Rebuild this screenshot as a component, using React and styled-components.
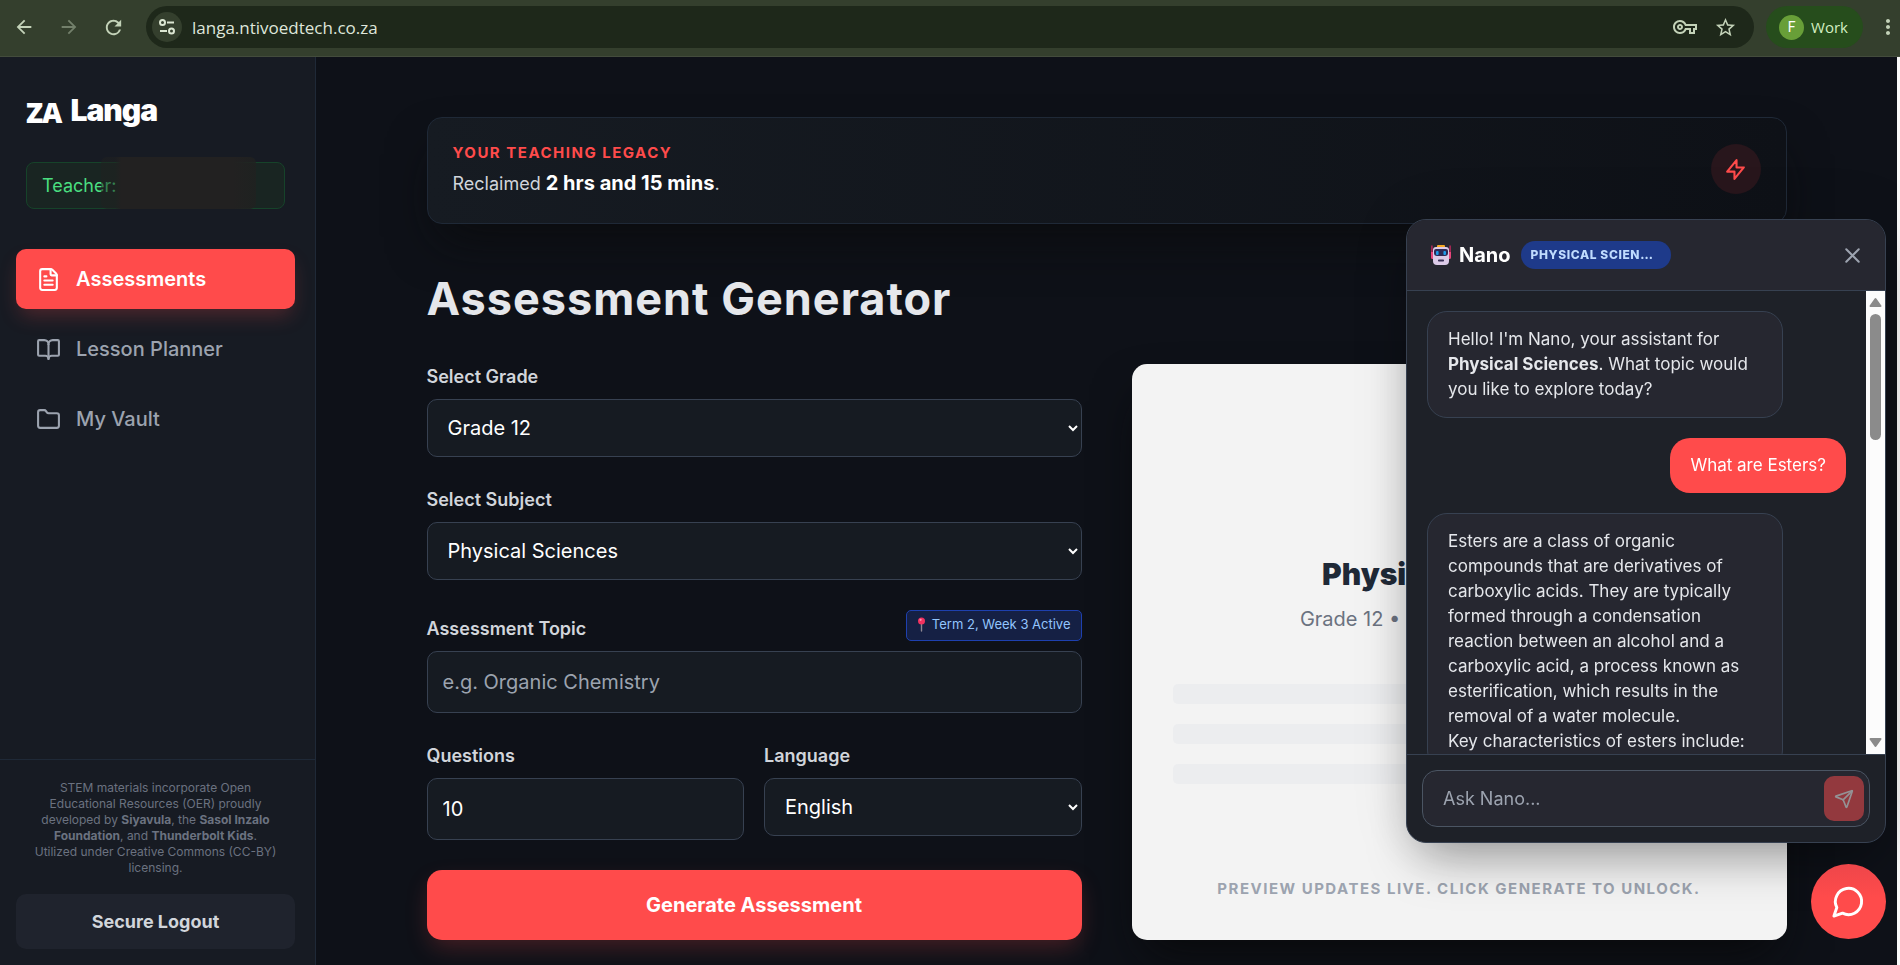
import React, { useState } from "react";
import styled, { createGlobalStyle } from "styled-components";
import { FileText, BookOpen, Folder, Send } from "lucide-react";
import {
  MdArrowBack,
  MdArrowForward,
  MdRefresh,
  MdStarBorder,
  MdMoreVert,
  MdOutlineVpnKey,
} from "react-icons/md";

const GlobalStyle = createGlobalStyle`
  *, *::before, *::after { box-sizing: border-box; }
  body {
    margin: 0;
    background: #0e1118;
    color: #e5e7eb;
    font-family: Inter, "Liberation Sans", sans-serif;
    font-size: 18px;
    line-height: 25px;
  }
  button, input, select { font-family: inherit; }
  button { border: 0; padding: 0; cursor: pointer; }
  h1, h2, p { margin: 0; }
`;

const Window = styled.div`
  display: flex;
  flex-direction: column;
  height: 100vh;
  overflow: hidden;
`;

/* Browser toolbar */

const BrowserBar = styled.header`
  display: flex;
  align-items: center;
  flex: none;
  height: 57px;
  padding: 0 0 2px 12px;
  background: #343f2d;
  border-bottom: 1px solid #434c3c;
`;

const BarButton = styled.button`
  display: grid;
  place-items: center;
  width: 24px;
  height: 24px;
  margin-right: ${(p) => p.$gap || 0}px;
  background: none;
  color: ${(p) => (p.$dim ? "#73806b" : "#c3d2b8")};
`;

const AddressBar = styled.div`
  display: flex;
  align-items: center;
  flex: 1;
  height: 42px;
  padding: 0 17px 0 6px;
  border-radius: 21px;
  background: #1e281a;
`;

const SiteButton = styled.button`
  display: grid;
  place-items: center;
  width: 30px;
  height: 30px;
  margin-right: 10px;
  border-radius: 50%;
  background: #343f2d;
  color: #dbe6d2;
`;

const Address = styled.input`
  flex: 1;
  min-width: 0;
  border: 0;
  padding: 0;
  outline: 0;
  background: none;
  color: #dfe6da;
  font-family: "Open Sans", "Noto Sans", sans-serif;
  font-size: 17px;
`;

const Profile = styled.button`
  display: flex;
  align-items: center;
  gap: 7px;
  height: 42px;
  margin: 0 13px 0 12px;
  padding: 0 15px 0 13px;
  border-radius: 21px;
  background: #264d1c;
  color: #d3efc2;
  font-family: "Open Sans", "Noto Sans", sans-serif;
  font-size: 15px;
`;

const Initial = styled.span`
  display: grid;
  place-items: center;
  width: 25px;
  height: 25px;
  border-radius: 50%;
  background: #689f38;
  color: #fff;
  font-family: Roboto, sans-serif;
  font-size: 14px;
`;

/* Page shell */

const Page = styled.div`
  display: flex;
  flex: 1;
  min-height: 0;
  border-right: 3px solid #fafafa;
`;

const Sidebar = styled.aside`
  display: flex;
  flex-direction: column;
  flex: none;
  width: 316px;
  background: #171b23;
  border-right: 1px solid #1f2937;
`;

const SidebarTop = styled.div`
  padding: 33px 30px 40px 26px;
`;

const Brand = styled.div`
  display: flex;
  align-items: flex-end;
  gap: 9px;
  color: #fff;
  font-size: 30px;
  font-weight: 900;
  line-height: 40px;
  letter-spacing: -1px;
`;

const CountryCode = styled.span`
  font-family: "Open Sans", sans-serif;
  font-size: 28px;
  font-weight: 800;
  line-height: 35px;
`;

const TeacherTag = styled.div`
  position: relative;
  height: 47px;
  margin-top: 32px;
  padding: 10px 15px;
  border: 1px solid #16432a;
  border-radius: 8px;
  background: #192522;
  color: #4ade80;
  font-size: 18px;
`;

const Redaction = styled.span`
  position: absolute;
  top: -6px;
  right: 28px;
  bottom: -1px;
  left: 74px;
  border-radius: 6px;
  background: linear-gradient(90deg, rgba(32, 33, 32, 0.5) 9%, #222121 13%, #222121 85%, rgba(32, 33, 32, 0.8));
`;

const Nav = styled.nav`
  display: flex;
  flex-direction: column;
  gap: 10px;
  flex: 1;
  padding: 0 20px 0 16px;
`;

const NavItem = styled.button`
  display: flex;
  align-items: center;
  gap: 15px;
  height: 60px;
  padding: 0 20px;
  border-radius: 10px;
  background: ${(p) => (p.$active ? "#ff4b4b" : "none")};
  box-shadow: ${(p) => (p.$active ? "0 10px 20px -4px rgba(255, 75, 75, 0.25)" : "none")};
  color: ${(p) => (p.$active ? "#fff" : "#9ca3af")};
  font-size: 20px;
  font-weight: ${(p) => (p.$active ? 600 : 500)};
`;

const SidebarFooter = styled.footer`
  padding: 20px 20px 16px 16px;
  border-top: 1px solid #1f2937;
`;

const Credits = styled.p`
  padding: 0 14px;
  margin-bottom: 18px;
  color: #6b7280;
  font-size: 12px;
  line-height: 16px;
  text-align: center;
`;

const LogoutButton = styled.button`
  width: 100%;
  height: 55px;
  border-radius: 10px;
  background: #1f232d;
  color: #d1d5db;
  font-size: 18px;
  font-weight: 700;
`;

const Main = styled.main`
  flex: 1;
  min-width: 0;
  overflow: hidden;
`;

const Content = styled.div`
  max-width: 1440px;
  margin: 0 auto;
  padding: 60px 40px 25px;
`;

const LegacyBanner = styled.section`
  display: flex;
  align-items: center;
  justify-content: space-between;
  padding: 22px 25px 25px;
  border: 1px solid #1f2937;
  border-radius: 15px;
  background: linear-gradient(90deg, #161b22, #0e1117);
  box-shadow: 0 25px 50px -12px rgba(10, 10, 10, 0.7);
`;

const Overline = styled.p`
  color: #ff4b4b;
  font-size: 15px;
  font-weight: 700;
  letter-spacing: 1.5px;
`;

const Reclaimed = styled.p`
  margin-top: 4px;
  color: #d1d5db;
  font-size: 18px;
  line-height: 28px;

  strong { color: #fff; font-size: 20px; }
`;

const BoltCircle = styled.span`
  display: grid;
  place-items: center;
  width: 50px;
  height: 50px;
  border-radius: 50%;
  background: #28161c;
  color: #ff4b4b;
`;

const Title = styled.h1`
  margin: 50px 0 40px;
  color: #e5e7eb;
  font-size: 45px;
  font-weight: 700;
  letter-spacing: 1px;
  line-height: 50px;
`;

const Columns = styled.div`
  display: grid;
  grid-template-columns: 1fr 1fr;
  gap: 50px;
`;

const Form = styled.form`
  display: flex;
  flex-direction: column;
  gap: 30px;
`;

const Field = styled.div`
  display: flex;
  flex-direction: column;
  gap: 10px;
  min-width: 0;
`;

const FieldPair = styled.div`
  display: grid;
  grid-template-columns: 1fr 1fr;
  gap: 20px;
`;

const LabelRow = styled.div`
  display: flex;
  align-items: flex-end;
  justify-content: space-between;
`;

const Label = styled.label`
  color: #d1d5db;
  font-size: 18px;
  font-weight: 600;
`;

const TermBadge = styled.span`
  display: flex;
  align-items: center;
  gap: 6px;
  height: 31px;
  padding: 0 10px 2px;
  border: 1px solid #1e40af;
  border-radius: 5px;
  background: #152044;
  color: #93c5fd;
  font-size: 13px;
`;

const TextInput = styled.input`
  width: 100%;
  height: 62px;
  padding: 0 15px;
  border: 1px solid #374151;
  border-radius: 10px;
  background: #161b22;
  color: #fff;
  font-size: 20px;

  &::placeholder { color: #9ca3af; }
`;

const Select = styled.select`
  width: 100%;
  height: 58px;
  padding: 0 0 0 16px;
  border: 1px solid #374151;
  border-radius: 10px;
  background: #161b22;
  color: #fff;
  font-size: 20px;
`;

const GenerateButton = styled.button`
  height: 70px;
  border-radius: 15px;
  background: #ff4b4b;
  box-shadow: 0 10px 25px -4px rgba(255, 75, 75, 0.25);
  color: #fff;
  font-size: 20px;
  font-weight: 700;
`;

const Preview = styled.section`
  display: flex;
  flex-direction: column;
  align-items: center;
  padding: 190px 41px 39px;
  border-radius: 15px;
  background: #f3f3f3;
  box-shadow: 0 25px 50px -12px rgba(8, 8, 8, 0.8);
`;

const PreviewTitle = styled.h2`
  color: #1f2937;
  font-size: 30px;
  font-weight: 900;
  line-height: 40px;
`;

const PreviewMeta = styled.p`
  margin: 10px 0 50px;
  color: #6b7280;
  font-size: 20px;
  line-height: 30px;
`;

const Skeleton = styled.span`
  width: 100%;
  height: 20px;
  margin-bottom: 20px;
  border-radius: 5px;
  background: #ecedef;
`;

const PreviewNote = styled.p`
  margin-top: auto;
  color: #9ca3af;
  font-size: 15px;
  font-weight: 700;
  letter-spacing: 1.5px;
  white-space: nowrap;
`;

/* Assistant */

const ChatPanel = styled.section`
  position: fixed;
  right: 14px;
  bottom: 122px;
  display: flex;
  flex-direction: column;
  width: 480px;
  height: 624px;
  overflow: hidden;
  border: 1px solid #374151;
  border-radius: 20px;
  background: #1e2128;
  box-shadow: 0 25px 50px -12px rgba(0, 0, 0, 0.35), 0 0 60px rgba(0, 0, 0, 0.1);
`;

const ChatHeader = styled.div`
  display: flex;
  align-items: center;
  flex: none;
  height: 71px;
  padding: 0 20px 0 24px;
  border-bottom: 1px solid #374151;
  background: #262730;
`;

const ChatName = styled.h2`
  margin: 0 10px 0 8px;
  color: #fff;
  font-size: 20px;
  font-weight: 700;
`;

const SubjectPill = styled.span`
  width: 150px;
  padding: 0 10px;
  overflow: hidden;
  border-radius: 14px;
  background: #1e3a8a;
  color: #bfdbfe;
  font-size: 12px;
  font-weight: 800;
  letter-spacing: 0.6px;
  line-height: 28px;
  text-overflow: ellipsis;
  text-transform: uppercase;
  white-space: nowrap;
`;

const CloseButton = styled.button`
  display: grid;
  place-items: center;
  margin-left: auto;
  background: none;
  color: #9ca3af;
`;

const ChatBody = styled.div`
  display: flex;
  flex: 1;
  min-height: 0;
`;

const Messages = styled.div`
  display: flex;
  flex-direction: column;
  align-items: flex-start;
  gap: 20px;
  flex: 1;
  padding: 20px;
  overflow: hidden;
`;

const Message = styled.div`
  flex: none;
  align-self: ${(p) => (p.$mine ? "flex-end" : "flex-start")};
  max-width: 356px;
  padding: 15px 20px;
  border: ${(p) => (p.$mine ? "0" : "1px solid #374151")};
  border-radius: 20px;
  background: ${(p) => (p.$mine ? "#ff4b4b" : "#262730")};
  color: ${(p) => (p.$mine ? "#fff" : "#e5e7eb")};
  font-size: 17px;
  line-height: 25px;
`;

const ScrollTrack = styled.div`
  display: flex;
  flex-direction: column;
  align-items: center;
  width: 19px;
  padding: 6px 0;
  background: #fcfcfc;
`;

const ScrollThumb = styled.span`
  width: 11px;
  height: 126px;
  margin: 7px 0 auto;
  border-radius: 6px;
  background: #8b8b8b;
`;

const ChatForm = styled.form`
  position: relative;
  flex: none;
  padding: 15px;
  border-top: 1px solid #374151;
`;

const ChatInput = styled.input`
  display: block;
  width: 100%;
  height: 57px;
  padding: 0 60px 0 20px;
  border: 1px solid #4b5563;
  border-radius: 15px;
  background: #262730;
  color: #e5e7eb;
  font-size: 18px;

  &::placeholder { color: #9ca3af; }
`;

const SendButton = styled.button`
  position: absolute;
  top: 21px;
  right: 21px;
  display: grid;
  place-items: center;
  width: 40px;
  height: 45px;
  border-radius: 10px;
  background: #93393e;
  color: #949194;
`;

const ChatToggle = styled.button`
  position: fixed;
  right: 14px;
  bottom: 26px;
  display: grid;
  place-items: center;
  width: 75px;
  height: 75px;
  border-radius: 50%;
  background: linear-gradient(#ee464a, #ff4b4b 45%);
  color: #fff;
`;

/* Drawings */

const SiteInfoIcon = () => (
  <svg width="18" height="18" viewBox="0 0 18 18" fill="none" stroke="currentColor" strokeWidth="2">
    <circle cx="4.5" cy="4.5" r="2.5" />
    <path d="M9 4.5h7M2 13h7" />
    <circle cx="13.5" cy="13" r="2.5" />
  </svg>
);

const BoltIcon = () => (
  <svg width="25" height="25" viewBox="0 0 24 24" fill="none" stroke="currentColor" strokeWidth="2" strokeLinecap="round" strokeLinejoin="round">
    <path d="M13 10V3L4 14h7v7l9-11h-7z" />
  </svg>
);

const CloseIcon = () => (
  <svg width="25" height="25" viewBox="0 0 24 24" fill="none" stroke="currentColor" strokeWidth="2" strokeLinecap="round">
    <path d="M6 18L18 6M6 6l12 12" />
  </svg>
);

const ChatIcon = () => (
  <svg width="35" height="35" viewBox="0 0 24 24" fill="none" stroke="currentColor" strokeWidth="2" strokeLinecap="round" strokeLinejoin="round">
    <path d="M7.9 20A9 9 0 1 0 4 16.1L2 22Z" />
  </svg>
);

const PinIcon = () => (
  <svg width="9" height="15" viewBox="0 0 9 15">
    <path d="M4.5 6v8" stroke="#8d8792" strokeWidth="1.4" strokeLinecap="round" />
    <circle cx="4.5" cy="4" r="3.5" fill="#f0315f" />
    <circle cx="3.6" cy="2.8" r="1.1" fill="#ff8fae" />
  </svg>
);

const RobotIcon = () => (
  <svg width="20" height="21" viewBox="0 0 20 21">
    <path d="M.9.6v11M19.1.6v11" stroke="#c2275d" strokeWidth="1.4" />
    <path d="M0 7h3v7H1.500Q0 14 0 12.500zM20 7h-3v7h1.500q1.500 0 1.500-1.500z" fill="#e8467c" />
    <rect x="6" y="0" width="8" height="3" rx="1" fill="#f6a823" />
    <path d="M2 5q0-3 3-3h10q3 0 3 3v11q0 4-4 4H6q-4 0-4-4z" fill="#dccbe8" />
    <path d="M3 6q0-2 2-2h10q2 0 2 2v2q0 3-3 3H6q-3 0-3-3z" fill="#2e2a55" />
    <rect x="5" y="6" width="2.600" height="4" rx="1" fill="#1f9bea" />
    <rect x="12.400" y="6" width="2.600" height="4" rx="1" fill="#1f9bea" />
    <rect x="7" y="14.500" width="6" height="2" rx=".8" fill="#3a3157" />
  </svg>
);

const ScrollArrow = ({ down }) => (
  <svg width="13" height="10" viewBox="0 0 13 10">
    <path d={down ? "M1.500 1h10L6.500 8z" : "M1.500 9h10L6.500 2z"} fill="#8b8b8b" stroke="#8b8b8b" strokeWidth="2" strokeLinejoin="round" />
  </svg>
);

const NAV = [
  { name: "Assessments", Icon: FileText },
  { name: "Lesson Planner", Icon: BookOpen },
  { name: "My Vault", Icon: Folder },
];

export default function App() {
  const [active, setActive] = useState("Assessments");
  const stop = (e) => e.preventDefault();

  return (
    <>
      <GlobalStyle />
      <Window>
        <Toolbar />
        <Page>
          <Sidebar>
            <SidebarTop>
              <Brand>
                <CountryCode>ZA</CountryCode>
                <span>Langa</span>
              </Brand>
              <TeacherTag>
                Teacher:
                <Redaction />
              </TeacherTag>
            </SidebarTop>
            <Nav>
              {NAV.map(({ name, Icon }) => (
                <NavItem key={name} $active={name === active} onClick={() => setActive(name)}>
                  <Icon size={25} />
                  {name}
                </NavItem>
              ))}
            </Nav>
            <SidebarFooter>
              <Credits>
                STEM materials incorporate Open Educational Resources (OER) proudly developed by{" "}
                <strong>Siyavula</strong>, the <strong>Sasol Inzalo</strong>{" "}
                <strong>Foundation</strong>, and <strong>Thunderbolt Kids</strong>.
                <br />
                Utilized under Creative Commons (CC-BY) licensing.
              </Credits>
              <LogoutButton>Secure Logout</LogoutButton>
            </SidebarFooter>
          </Sidebar>
          <Main>
            <Content>
              <LegacyBanner>
                <div>
                  <Overline>YOUR TEACHING LEGACY</Overline>
                  <Reclaimed>
                    Reclaimed <strong>2 hrs and 15 mins</strong>.
                  </Reclaimed>
                </div>
                <BoltCircle>
                  <BoltIcon />
                </BoltCircle>
              </LegacyBanner>
              <Title>Assessment Generator</Title>
              <Columns>
                <Form onSubmit={stop}>
                  <Field>
                    <Label htmlFor="grade">Select Grade</Label>
                    <Select id="grade" defaultValue="Grade 12">
                      <option>Grade 10</option>
                      <option>Grade 11</option>
                      <option>Grade 12</option>
                    </Select>
                  </Field>
                  <Field>
                    <Label htmlFor="subject">Select Subject</Label>
                    <Select id="subject">
                      <option>Physical Sciences</option>
                    </Select>
                  </Field>
                  <Field>
                    <LabelRow>
                      <Label htmlFor="topic">Assessment Topic</Label>
                      <TermBadge>
                        <PinIcon />
                        Term 2, Week 3 Active
                      </TermBadge>
                    </LabelRow>
                    <TextInput id="topic" placeholder="e.g. Organic Chemistry" />
                  </Field>
                  <FieldPair>
                    <Field>
                      <Label htmlFor="questions">Questions</Label>
                      <TextInput id="questions" type="number" defaultValue="10" />
                    </Field>
                    <Field>
                      <Label htmlFor="language">Language</Label>
                      <Select id="language">
                        <option>English</option>
                      </Select>
                    </Field>
                  </FieldPair>
                  <GenerateButton type="submit">Generate Assessment</GenerateButton>
                </Form>
                <Preview>
                  <PreviewTitle>Physical Sciences</PreviewTitle>
                  <PreviewMeta>Grade 12 • 10 Questions • English</PreviewMeta>
                  <Skeleton />
                  <Skeleton />
                  <Skeleton />
                  <PreviewNote>PREVIEW UPDATES LIVE. CLICK GENERATE TO UNLOCK.</PreviewNote>
                </Preview>
              </Columns>
            </Content>
          </Main>
        </Page>
      </Window>
      <Chat onSubmit={stop} />
      <ChatToggle aria-label="Toggle assistant">
        <ChatIcon />
      </ChatToggle>
    </>
  );
}

function Toolbar() {
  return (
    <BrowserBar>
      <BarButton $gap={21} aria-label="Back">
        <MdArrowBack size={22} />
      </BarButton>
      <BarButton $gap={20} $dim aria-label="Forward">
        <MdArrowForward size={22} />
      </BarButton>
      <BarButton $gap={21} aria-label="Reload">
        <MdRefresh size={23} />
      </BarButton>
      <AddressBar>
        <SiteButton aria-label="Site information">
          <SiteInfoIcon />
        </SiteButton>
        <Address aria-label="Address" defaultValue="langa.ntivoedtech.co.za" />
        <BarButton $gap={16} aria-label="Passwords">
          <MdOutlineVpnKey size={24} />
        </BarButton>
        <BarButton aria-label="Bookmark">
          <MdStarBorder size={23} />
        </BarButton>
      </AddressBar>
      <Profile>
        <Initial>F</Initial>
        Work
      </Profile>
      <BarButton aria-label="Menu">
        <MdMoreVert size={24} />
      </BarButton>
    </BrowserBar>
  );
}

function Chat({ onSubmit }) {
  return (
    <ChatPanel>
      <ChatHeader>
        <RobotIcon />
        <ChatName>Nano</ChatName>
        <SubjectPill>Physical Sciences</SubjectPill>
        <CloseButton aria-label="Close">
          <CloseIcon />
        </CloseButton>
      </ChatHeader>
      <ChatBody>
        <Messages>
          <Message>
            Hello! I'm Nano, your assistant for <strong>Physical Sciences</strong>. What topic would
            you like to explore today?
          </Message>
          <Message $mine>What are Esters?</Message>
          <Message>
            Esters are a class of organic compounds that are derivatives of carboxylic acids. They
            are typically formed through a condensation reaction between an alcohol and a carboxylic
            acid, a process known as esterification, which results in the removal of a water
            molecule.
            <br />
            Key characteristics of esters include:
          </Message>
        </Messages>
        <ScrollTrack>
          <ScrollArrow />
          <ScrollThumb />
          <ScrollArrow down />
        </ScrollTrack>
      </ChatBody>
      <ChatForm onSubmit={onSubmit}>
        <ChatInput aria-label="Message" placeholder="Ask Nano..." />
        <SendButton type="submit" aria-label="Send">
          <Send size={20} />
        </SendButton>
      </ChatForm>
    </ChatPanel>
  );
}
